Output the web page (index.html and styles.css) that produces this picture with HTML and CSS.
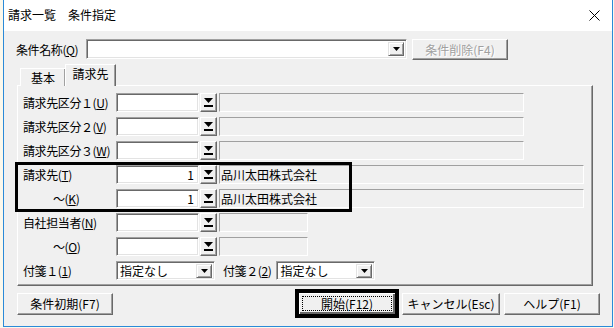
FILE: index.html
```html
<!DOCTYPE html>
<html lang="ja">
<head>
  <meta charset="UTF-8">
  <title>請求一覧 条件指定</title>
  <link rel="stylesheet" href="styles.css">
</head>
<body>

<div class="window">
  <div class="titlebar">
    <span class="title">請求一覧　条件指定</span>
    <svg class="close" width="11" height="11" viewBox="0 0 11 11"><path d="M0.5 0.5 L10.5 10.5 M10.5 0.5 L0.5 10.5" stroke="#000" stroke-width="1"/></svg>
  </div>

  <div class="client">
    <!-- 条件名称 -->
    <div class="name-row">
      <span class="lbl name-lbl">条件名称(<u>Q</u>)</span>
      <div class="combo">
        <span class="drop"><svg width="7" height="4" viewBox="0 0 7 4"><path d="M0 0 H7 L3.5 4 Z" fill="#000"/></svg></span>
      </div>
      <button class="btn disabled del-btn">条件削除(F4)</button>
    </div>

    <!-- タブ -->
    <div class="tabs">
      <span class="tab">基本</span>
      <span class="tab active">請求先</span>
    </div>

    <div class="panel">
      <div class="row">
        <span class="lbl">請求先区分１(<u>U</u>)</span>
        <span class="input"></span>
        <span class="pick"><svg width="9" height="9" viewBox="0 0 9 9"><path d="M0 0 H9 L4.5 5 Z" fill="#000"/><rect x="0" y="7" width="9" height="2" fill="#000"/></svg></span>
        <span class="field w-mid"></span>
      </div>
      <div class="row">
        <span class="lbl">請求先区分２(<u>V</u>)</span>
        <span class="input"></span>
        <span class="pick"><svg width="9" height="9" viewBox="0 0 9 9"><path d="M0 0 H9 L4.5 5 Z" fill="#000"/><rect x="0" y="7" width="9" height="2" fill="#000"/></svg></span>
        <span class="field w-mid"></span>
      </div>
      <div class="row">
        <span class="lbl">請求先区分３(<u>W</u>)</span>
        <span class="input"></span>
        <span class="pick"><svg width="9" height="9" viewBox="0 0 9 9"><path d="M0 0 H9 L4.5 5 Z" fill="#000"/><rect x="0" y="7" width="9" height="2" fill="#000"/></svg></span>
        <span class="field w-mid"></span>
      </div>

      <div class="marked">
        <div class="row">
          <span class="lbl">請求先(<u>T</u>)</span>
          <span class="input num">1</span>
          <span class="pick"><svg width="9" height="9" viewBox="0 0 9 9"><path d="M0 0 H9 L4.5 5 Z" fill="#000"/><rect x="0" y="7" width="9" height="2" fill="#000"/></svg></span>
          <span class="field w-long">品川太田株式会社</span>
        </div>
        <div class="row">
          <span class="lbl indent">～(<u>K</u>)</span>
          <span class="input num">1</span>
          <span class="pick"><svg width="9" height="9" viewBox="0 0 9 9"><path d="M0 0 H9 L4.5 5 Z" fill="#000"/><rect x="0" y="7" width="9" height="2" fill="#000"/></svg></span>
          <span class="field w-long">品川太田株式会社</span>
        </div>
        <div class="mark"></div>
      </div>

      <div class="row">
        <span class="lbl">自社担当者(<u>N</u>)</span>
        <span class="input"></span>
        <span class="pick"><svg width="9" height="9" viewBox="0 0 9 9"><path d="M0 0 H9 L4.5 5 Z" fill="#000"/><rect x="0" y="7" width="9" height="2" fill="#000"/></svg></span>
        <span class="field w-short"></span>
      </div>
      <div class="row">
        <span class="lbl indent">～(<u>O</u>)</span>
        <span class="input"></span>
        <span class="pick"><svg width="9" height="9" viewBox="0 0 9 9"><path d="M0 0 H9 L4.5 5 Z" fill="#000"/><rect x="0" y="7" width="9" height="2" fill="#000"/></svg></span>
        <span class="field w-short"></span>
      </div>
      <div class="row">
        <span class="lbl">付箋１(<u>1</u>)</span>
        <div class="select">
          <span class="sel-text">指定なし</span>
          <span class="drop"><svg width="7" height="4" viewBox="0 0 7 4"><path d="M0 0 H7 L3.5 4 Z" fill="#000"/></svg></span>
        </div>
        <span class="lbl2">付箋２(<u>2</u>)</span>
        <div class="select">
          <span class="sel-text">指定なし</span>
          <span class="drop"><svg width="7" height="4" viewBox="0 0 7 4"><path d="M0 0 H7 L3.5 4 Z" fill="#000"/></svg></span>
        </div>
      </div>
    </div>

    <div class="footer">
      <button class="btn reset-btn">条件初期(F7)</button>
      <div class="spacer"></div>
      <button class="btn start-btn"><span class="focus">開始(F12)</span></button>
      <button class="btn cancel-btn">キャンセル(Esc)</button>
      <button class="btn help-btn">ヘルプ(F1)</button>
    </div>
  </div>
</div>

</body>
</html>
```

FILE: styles.css
```css
body {
  margin: 0;
  background: #fbf8ec;
  font-family: "Noto Sans CJK JP", "Noto Sans", sans-serif;
  font-size: 12px;
  color: #000;
}

.window {
  margin-left: 3px;
  width: 608px;
  height: 326px;
  border: 1px solid #2b8ad8;
  border-top: none;
  background: #f0f0f0;
  display: flex;
  flex-direction: column;
}

.titlebar {
  height: 31px;
  background: #fff;
  display: flex;
  align-items: center;
  padding: 0 12px 0 4px;
  flex-shrink: 0;
}

.title {
  flex: 1;
  line-height: 14px;
  margin-top: -2px;
}

.close {
  margin-top: -1px;
}

.client {
  flex: 1;
  padding: 8px 19px 0 12px;
}

.lbl {
  width: 93px;
  flex-shrink: 0;
  white-space: nowrap;
  line-height: 19px;
  letter-spacing: -0.4px;
}

u {
  text-decoration-thickness: 1px;
  text-underline-offset: 1px;
}

.name-row {
  display: flex;
  align-items: center;
  height: 20px;
}

.name-lbl {
  width: 70px;
}

.combo {
  width: 321px;
  height: 20px;
  box-sizing: border-box;
  background: #fff;
  border: 1px solid;
  border-color: #a0a0a0 #fff #fff #a0a0a0;
  box-shadow: inset 1px 1px #696969, inset -1px -1px #e3e3e3;
  display: flex;
  justify-content: flex-end;
  padding: 2px;
}

.drop {
  width: 16px;
  height: 14px;
  box-sizing: border-box;
  background: #f0f0f0;
  border: 1px solid;
  border-color: #e3e3e3 #696969 #696969 #e3e3e3;
  box-shadow: inset 1px 1px #fff, inset -1px -1px #a0a0a0;
  display: flex;
  align-items: center;
  justify-content: center;
}

.btn {
  font-family: inherit;
  font-size: 12px;
  height: 21px;
  padding: 0;
  background: #f0f0f0;
  border: 1px solid;
  border-color: #fff #696969 #696969 #fff;
  box-shadow: inset -1px -1px #a0a0a0;
  color: #000;
  line-height: 17px;
  white-space: nowrap;
}

.btn.disabled {
  color: #a0a0a0;
  text-shadow: 1px 1px #fff;
}

.del-btn {
  width: 96px;
  margin-left: 5px;
}

.tabs {
  display: flex;
  align-items: flex-end;
  margin: 5px 0 0 4px;
  height: 22px;
  position: relative;
  z-index: 1;
}

.tab {
  height: 18px;
  line-height: 17px;
  padding: 0;
  width: 46px;
  box-sizing: border-box;
  text-align: center;
  white-space: nowrap;
  border: 1px solid;
  border-color: #fff #696969 transparent #fff;
  box-shadow: inset -1px 0 #a0a0a0;
  border-bottom: none;
  background: #f0f0f0;
}

.tab.active {
  height: 22px;
  line-height: 17px;
  width: 51px;
  margin-left: -1px;
}

.panel {
  margin: -1px 0 0 1px;
  height: 201px;
  box-sizing: border-box;
  border: 1px solid;
  border-color: #fff #696969 #696969 #fff;
  box-shadow: inset -1px -1px #a0a0a0;
  padding: 7px 0 0 5px;
  display: flex;
  flex-direction: column;
  gap: 5px;
}

.row {
  display: flex;
  align-items: center;
  height: 19px;
}

.indent {
  padding-left: 30px;
  box-sizing: border-box;
}

.input {
  width: 83px;
  height: 19px;
  box-sizing: border-box;
  background: #fff;
  border: 1px solid;
  border-color: #a0a0a0 #fff #fff #a0a0a0;
  box-shadow: inset 1px 1px #696969, inset -1px -1px #e3e3e3;
  line-height: 17px;
  padding: 0 4px;
}

.input.num {
  text-align: right;
}

.pick {
  width: 17px;
  height: 19px;
  margin-left: 1px;
  box-sizing: border-box;
  background: #f0f0f0;
  border: 1px solid;
  border-color: #fff #696969 #696969 #fff;
  box-shadow: inset -1px -1px #a0a0a0;
  display: flex;
  align-items: center;
  justify-content: center;
}

.field {
  height: 19px;
  margin-left: 2px;
  box-sizing: border-box;
  border: 1px solid;
  border-color: #a0a0a0 #fff #fff #a0a0a0;
  line-height: 17px;
  padding-left: 1px;
  white-space: nowrap;
}

.w-mid {
  width: 305px;
}

.w-long {
  width: 365px;
}

.w-short {
  width: 89px;
}

.marked {
  position: relative;
  display: flex;
  flex-direction: column;
  gap: 5px;
}

.mark {
  position: absolute;
  left: -8px;
  top: -3px;
  width: 337px;
  height: 50px;
  border: 3px solid #000;
  box-sizing: border-box;
  pointer-events: none;
}

.select {
  width: 99px;
  height: 19px;
  box-sizing: border-box;
  background: #fff;
  border: 1px solid;
  border-color: #a0a0a0 #fff #fff #a0a0a0;
  box-shadow: inset 1px 1px #696969, inset -1px -1px #e3e3e3;
  display: flex;
  align-items: center;
  padding: 2px;
}

.sel-text {
  flex: 1;
  padding-left: 1px;
  line-height: 15px;
}

.lbl2 {
  margin: 0 5px 0 8px;
  white-space: nowrap;
  letter-spacing: -0.4px;
}

.footer {
  display: flex;
  align-items: center;
  margin-top: 6px;
  margin-right: -7px;
  padding-left: 1px;
}

.spacer {
  flex: 1;
}

.reset-btn {
  width: 96px;
  height: 22px;
}

.start-btn {
  width: 98px;
  height: 23px;
  border-color: #000;
  box-shadow: inset 1px 1px #fff, inset -2px -2px #696969;
  outline: 3px solid #000;
  padding: 3px;
  display: flex;
}

.focus {
  flex: 1;
  border: 1px dotted #000;
  line-height: 13px;
}

.cancel-btn {
  width: 98px;
  height: 22px;
  margin-left: 6px;
}

.help-btn {
  width: 96px;
  height: 22px;
  margin-left: 4px;
}
```
